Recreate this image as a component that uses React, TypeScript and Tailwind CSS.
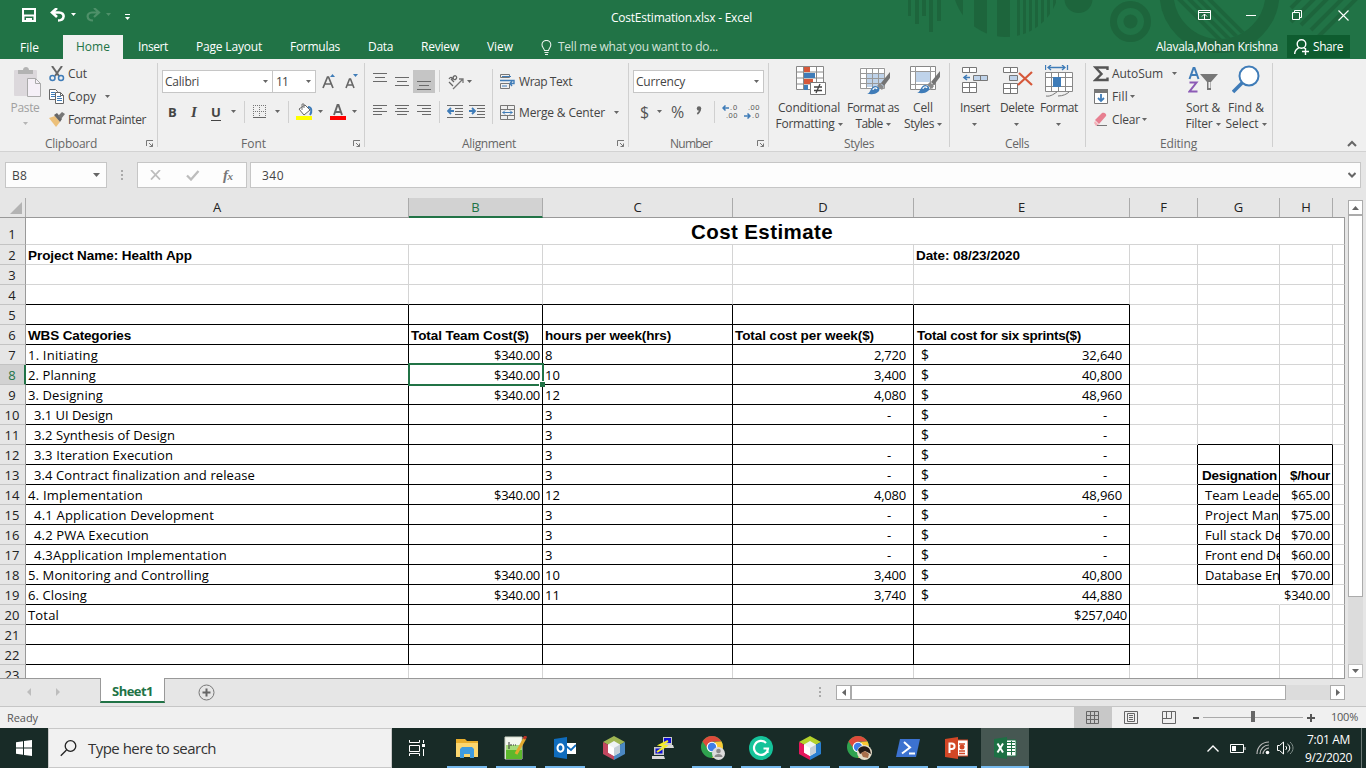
import { useLayoutEffect, useRef, type ReactNode } from "react";

/* Text run set to an exact advance width by adjusting its tracking. */
function Fit({ w, t, c = "" }: { w: number; t: string; c?: string }) {
  const ref = useRef<HTMLSpanElement>(null);
  useLayoutEffect(() => {
    const el = ref.current;
    if (!el) return;
    el.style.letterSpacing = "0px";
    const natural = el.getBoundingClientRect().width;
    el.style.letterSpacing = `${(w - natural) / t.length}px`;
  }, [w, t]);
  return (
    <span className={`inline-block shrink-0 whitespace-pre text-left ${c}`} style={{ width: w }}>
      <span ref={ref} className="inline-block">{t}</span>
    </span>
  );
}

function Svg({ w, h, c = "", children }: { w: number; h: number; c?: string; children: ReactNode }) {
  return (
    <svg width={w} height={h} viewBox={`0 0 ${w} ${h}`} fill="none" className={`block shrink-0 ${c}`}>
      {children}
    </svg>
  );
}

function Caret({ c = "", color = "#666" }: { c?: string; color?: string }) {
  return (
    <Svg w={5} h={3} c={c}>
      <path d="M0 0h5L2.5 3z" fill={color} />
    </Svg>
  );
}

function Launcher() {
  return (
    <Svg w={8} h={8} c="mr-[3px]">
      <path d="M.5 6V.5H7M3 3l3.500 3.500M6.500 3.500v3h-3" stroke="#777" />
    </Svg>
  );
}

function Divider({ c = "" }: { c?: string }) {
  return <div className={`w-px shrink-0 bg-[#d0d0d0] ${c}`} />;
}

function Group({ label, lw, lx, w, launcher, children }: { label: string; lw: number; lx: number; w: number; launcher?: boolean; children: ReactNode }) {
  return (
    <section className="flex h-[92px] shrink-0" style={{ width: w }}>
      <div className="flex min-w-0 flex-1 flex-col">
        <div className="flex h-[76px]">{children}</div>
        <div className="flex h-4 items-center justify-between pt-[2px] text-[#666]">
          <div className="flex" style={{ paddingLeft: lx }}>
            <Fit w={lw} t={label} />
          </div>
          {launcher && <Launcher />}
        </div>
      </div>
      <Divider c="mt-1 h-[84px]" />
    </section>
  );
}

function Big({ w, icon, a, aw, b, bw, c = "" }: { w: number; icon: ReactNode; a: string; aw: number; b?: string; bw?: number; c?: string }) {
  return (
    <div className={`flex shrink-0 flex-col items-center ${c}`} style={{ width: w }}>
      <div className="flex h-[41px] items-start justify-center pt-[6px]">{icon}</div>
      <div className="flex h-4 items-center"><Fit w={aw} t={a} /></div>
      <div className="flex h-4 items-center">
        {b && <Fit w={bw ?? 0} t={b} />}
        <Caret c={b ? "ml-[3px]" : "mr-px"} />
      </div>
    </div>
  );
}

const G = "#6a6a6a";
const BL = "#3f7cb8";

function Lines({ rows, c = "" }: { rows: [number, number][]; c?: string }) {
  return (
    <Svg w={14} h={14} c={c}>
      {rows.map(([x, l], i) => (
        <path key={i} d={`M${x} ${i * 3 + (rows.length === 3 ? i : 0) + 0.5}h${l}`} stroke={G} />
      ))}
    </Svg>
  );
}

function Indent({ inc }: { inc?: boolean }) {
  return (
    <Svg w={16} h={13}>
      <path d="M0 .5h16M8 3.500h8M8 6.500h8M8 9.500h8M0 12.500h16" stroke={G} />
      <path d={inc ? "M0 6h6M3 3l3 3-3 3" : "M7 6H1M4 3L1 6l3 3"} stroke={BL} strokeWidth="1.800" />
    </Svg>
  );
}

function Brush() {
  return (
    <g>
      <path d="M30 7l-9 11 3 3 6-8z" fill="#737373" />
      <path d="M20 18l4 4-2 3-5-4z" fill="#8a8a8a" />
      <path d="M7 29c4-1 3-7 8-8 4 0 6 4 3 6-3 3-7 2-11 2z" fill={BL} />
      <path d="M13 25c0-2 3-3 4-1" stroke="#fff" strokeWidth="1.300" />
    </g>
  );
}

function Ribbon() {
  return (
    <div className="flex h-[93px] border-b border-[#d2d2d2] bg-[#f0f0f0] text-[12px] leading-4 text-[#444]">
      <Group label="Clipboard" lx={45} lw={52} w={158} launcher>
        <div className="flex w-[49px] flex-col items-center pl-px pt-[8px] text-[#a0a0a0]">
          <Svg w={29} h={31} c="ml-[5px]">
            <rect x="1" y="3" width="23" height="26" rx="1" fill="#dcd8dc" />
            <path d="M5 3h5c0-4 6-4 6 0h4v4H5z" fill="#b3b3b3" />
            <path d="M14.500 11.500h8l5 5v13h-13z" fill="#f5f0f7" stroke="#aaa" />
            <path d="M22.500 11.500v5h5" stroke="#aaa" />
          </Svg>
          <Fit w={29} t="Paste" c="mt-[2px]" />
          <Caret c="mt-[6px]" color="#b5b5b5" />
        </div>
        <div className="flex flex-col pt-[3px]">
          <div className="flex h-[23px] items-center gap-[3px]">
            <Svg w={16} h={16}>
              <path d="M3 0l7 10M13 0L6 10" stroke="#666" strokeWidth="2" />
              <circle cx="3.500" cy="12" r="2.500" stroke={BL} strokeWidth="1.500" />
              <circle cx="12" cy="12" r="2.500" stroke={BL} strokeWidth="1.500" />
            </Svg>
            <Fit w={19} t="Cut" />
          </div>
          <div className="flex h-[23px] items-center gap-[3px]">
            <Svg w={16} h={15}>
              <path d="M.5.5h6l2 2v8h-8z" fill="#fff" stroke="#666" />
              <path d="M2 3.500h4M2 5.500h4M2 7.500h4" stroke={BL} />
              <path d="M6.500 3.500h5l3 3v8h-8z" fill="#fff" stroke="#666" />
              <path d="M11.500 3.500v3h3" stroke="#666" />
              <path d="M8 7.500h4M8 9.500h5M8 11.500h5" stroke={BL} />
            </Svg>
            <Fit w={28} t="Copy" />
            <Caret c="ml-[6px]" />
          </div>
          <div className="flex h-[23px] items-center gap-[3px]">
            <Svg w={16} h={15}>
              <path d="M0 6l6-2 5 6-4 5z" fill="#ecc07a" />
              <path d="M5 3l3-2 5 6-2 3z" fill="#666" />
              <path d="M9 4l4-4 3 2-4 5z" fill="#777" />
            </Svg>
            <Fit w={78} t="Format Painter" />
          </div>
        </div>
      </Group>

      <Group label="Font" lx={83} lw={25} w={207} launcher>
        <div className="flex flex-col pt-[11px]">
          <div className="flex h-[23px] items-center pl-[4px]">
            <div className="flex h-[23px] w-[111px] items-center justify-between border border-[#c6c6c6] bg-white pl-[2px] pr-[4px]">
              <Fit w={34} t="Calibri" />
              <Caret />
            </div>
            <div className="flex h-[23px] w-[43px] items-center justify-between border border-l-0 border-[#c6c6c6] bg-white pl-[3px] pr-[4px]">
              <Fit w={12} t="11" />
              <Caret />
            </div>
            <Svg w={14} h={16} c="ml-[6px]">
              <path d="M1 14L5.500 3h1L11 14M2.500 10h7" stroke="#666" strokeWidth="1.700" />
              <path d="M8 3h5l-2.500-3z" fill={BL} />
            </Svg>
            <Svg w={13} h={16} c="ml-[9px]">
              <path d="M1 14L4.500 5h1L9 14M2.500 11h5" stroke="#666" strokeWidth="1.600" />
              <path d="M8 0h5l-2.500 3z" fill={BL} />
            </Svg>
          </div>
          <div className="mt-[7px] flex h-[23px] items-center pl-[10px] text-[13px] leading-5 text-[#444]">
            <span className="w-[9px] font-bold">B</span>
            <span className="ml-[11px] w-[12px] text-center font-['Liberation_Serif'] text-[15px] font-bold italic">I</span>
            <span className="ml-[11px] h-[18px] w-[10px] border-b border-[#444] text-center font-bold leading-[19px]">U</span>
            <Caret c="ml-[10px]" />
            <Divider c="ml-[8px] h-[22px]" />
            <Svg w={14} h={14} c="ml-[8px]">
              <path d="M.5 0v12M6.500 0v12M12.500 0v12M0 .5h13M0 6.500h13" stroke="#777" strokeDasharray="1 1" />
              <path d="M0 12.500h13" stroke="#666" />
            </Svg>
            <Caret c="ml-[8px]" />
            <Divider c="ml-[8px] h-[22px]" />
            <Svg w={17} h={17} c="ml-[7px]">
              <path d="M3 6l6-4 5 5-6 5z" fill="#fff" stroke="#666" />
              <path d="M6 7V1h2v4" stroke="#777" />
              <path d="M12 4c4 0 4 5 2 8" stroke={BL} strokeWidth="2" />
              <path d="M0 13h16v4H0z" fill="#ff0" />
            </Svg>
            <Caret c="ml-[5px]" />
            <Svg w={16} h={17} c="ml-[7px]">
              <path d="M4 12L7.500 2h1L12 12M5 9h6" stroke="#666" strokeWidth="1.900" />
              <path d="M0 13h16v4H0z" fill="#f00" />
            </Svg>
            <Caret c="ml-[6px]" />
          </div>
        </div>
      </Group>

      <Group label="Alignment" lx={97} lw={54} w={264} launcher>
        <div className="flex w-[127px] flex-col pt-[11px]">
          <div className="flex h-[23px] items-start">
            <Lines c="ml-[8px] mt-[3px]" rows={[[0, 14], [2, 10], [0, 14]]} />
            <Lines c="ml-[8px] mt-[7px]" rows={[[0, 14], [2, 10], [0, 14]]} />
            <div className="ml-[4px] flex h-[23px] w-[22px] items-start justify-center bg-[#c5c5c5] pt-[11px]">
              <Lines rows={[[0, 14], [2, 10], [0, 14]]} />
            </div>
            <Divider c="ml-[4px] h-[22px]" />
            <Svg w={16} h={16} c="ml-[8px] mt-[4px]">
              <path d="M1 8l4 4M3 5l3 3M1 5c2-3 4-1 3 1M5 3c2-3 5 0 3 2s-4-1-2-3" stroke="#666" strokeWidth="1.300" />
              <path d="M5 15L15 5M11 5h4v4" stroke="#777" strokeWidth="1.300" />
            </Svg>
            <Caret c="ml-[3px] mt-[10px]" />
          </div>
          <div className="mt-[7px] flex h-[23px] items-center">
            <Lines c="ml-[8px]" rows={[[0, 14], [0, 9], [0, 14], [0, 9], [0, 0]]} />
            <Lines c="ml-[8px]" rows={[[0, 14], [2, 10], [0, 14], [2, 10], [0, 0]]} />
            <Lines c="ml-[8px]" rows={[[0, 14], [5, 9], [0, 14], [5, 9], [0, 0]]} />
            <Divider c="ml-[8px] h-[22px]" />
            <span className="ml-[7px]"><Indent /></span>
            <span className="ml-[6px]"><Indent inc /></span>
          </div>
        </div>
        <Divider c="mt-[10px] h-[55px]" />
        <div className="flex flex-col pl-[7px] pt-[11px]">
          <div className="flex h-[23px] items-center">
            <Svg w={16} h={15}>
              <path d="M.5.500h9v3h-9zM.5 9.500h9v5h-9z" stroke="#777" />
              <path d="M0 6.500h14v3h-4M12 7l-2 2.500 2 2.500" stroke={BL} strokeWidth="1.400" />
              <path d="M2 2.500h9M2 12h5" stroke={BL} />
            </Svg>
            <Fit w={53} t="Wrap Text" c="ml-[3px]" />
          </div>
          <div className="mt-[8px] flex h-[23px] items-center">
            <Svg w={15} h={15}>
              <path d="M.5.500h14v14H.5zM.5 4.500h14M.5 10.500h14M7.500 0v4M7.500 11v4" stroke="#777" />
              <path d="M2.500 7.500h10M5 5.500l-2 2 2 2M10 5.500l2 2-2 2" stroke={BL} />
            </Svg>
            <Fit w={86} t="Merge & Center" c="ml-[4px]" />
            <Caret c="ml-[9px]" />
          </div>
        </div>
      </Group>

      <Group label="Number" lx={41} lw={42} w={140} launcher>
        <div className="flex flex-col pt-[11px]">
          <div className="flex h-[23px] items-center pl-[4px]">
            <div className="flex h-[23px] w-[131px] items-center justify-between border border-[#c6c6c6] bg-white pl-[2px] pr-[4px]">
              <Fit w={49} t="Currency" />
              <Caret />
            </div>
          </div>
          <div className="mt-[7px] flex h-[23px] items-center pl-[11px] text-[16px] leading-5 text-[#555]">
            <Fit w={9} t="$" />
            <Caret c="ml-[8px]" />
            <Fit w={14} t="%" c="ml-[9px]" />
            <Svg w={6} h={9} c="ml-[11px] mb-[2px]">
              <circle cx="3" cy="2.500" r="2.200" fill="#666" />
              <path d="M4.300 2.500c0 3-1 4-3 5.500" stroke="#666" strokeWidth="1.600" />
            </Svg>
            <Divider c="ml-[12px] h-[22px]" />
            <div className="ml-[7px] flex h-[16px] w-[16px] flex-col font-['Liberation_Sans'] text-[7.500px] leading-[8px]">
              <div className="flex h-[8px] items-center justify-between">
                <Svg w={7} h={6}><path d="M1 3h6M3.500.5L1 3l2.500 2.500" stroke={BL} strokeWidth="1.500" /></Svg>
                <Fit w={8} t=".0" />
              </div>
              <div className="flex h-[8px] justify-end"><Fit w={12} t=".00" /></div>
            </div>
            <div className="ml-[6px] flex h-[16px] w-[16px] flex-col font-['Liberation_Sans'] text-[7.500px] leading-[8px]">
              <div className="flex h-[8px] justify-end"><Fit w={12} t=".00" /></div>
              <div className="flex h-[8px] items-center justify-between">
                <Svg w={7} h={6}><path d="M0 3h6M3.500.5L6 3 3.500 5.500" stroke={BL} strokeWidth="1.500" /></Svg>
                <Fit w={8} t=".0" />
              </div>
            </div>
          </div>
        </div>
      </Group>

      <Group label="Styles" lx={75} lw={30} w={181}>
        <Big c="ml-[6px]" w={68} a="Conditional" aw={62} b="Formatting" bw={59} icon={
          <Svg w={30} h={31} c="ml-[3px]">
            <path d="M.5 1.500h27v23H.5zM7.500 1v24M20.500 1v24M0 7h28M0 13h28M0 19h28" stroke="#888" fill="#fff" />
            <path d="M8 2h6v5H8zM8 14h9v5H8z" fill="#d6583a" />
            <path d="M8 8h11v5H8zM8 20h4v5H8z" fill={BL} />
            <path d="M14.500 17.500h15v12h-15z" fill="#fff" stroke="#777" />
            <path d="M18 22h8M18 25.500h8M24 19l-4 9" stroke="#444" strokeWidth="1.300" />
          </Svg>
        } />
        <Big c="ml-[2px]" w={56} a="Format as" aw={52} b="Table" bw={27} icon={
          <Svg w={30} h={31} c="ml-[3px]">
            <path d="M.5 2.500h24v21H.5z" fill="#fff" />
            <path d="M7 8h18v14H7z" fill="#bfd3ea" />
            <path d="M.5 3.500h24v20H.5zM6.500 3v21M12.500 3v21M18.500 3v21M0 8.500h25M0 13.500h25M0 18.500h25" stroke="#999" />
            <Brush />
          </Svg>
        } />
        <Big c="ml-[2px]" w={40} a="Cell" aw={20} b="Styles" bw={30} icon={
          <Svg w={30} h={31} c="ml-[3px]">
            <path d="M.5 1.500h25v23H.5z" fill="#fff" stroke="#888" />
            <path d="M.5 6.500h25M.5 19.500h25M5.500 1v24M20.500 1v24" stroke="#999" />
            <path d="M6 7h14v10H6z" fill="#bfd3ea" />
            <g transform="translate(0 -1)"><Brush /></g>
          </Svg>
        } />
      </Group>

      <Group label="Cells" lx={55} lw={24} w={136}>
        <Big c="ml-[5px]" w={40} a="Insert" aw={30} icon={
          <Svg w={27} h={31} c="ml-px">
            <path d="M.5 2.500h14v5H.5zM7.500 2v6M.5 17.500h14v10H.5zM7.500 17v11M0 22.500h15" stroke="#777" fill="#fff" />
            <path d="M11.500 10.500h14v5h-14z" fill="#bfd3ea" stroke="#777" />
            <path d="M18.500 10v6" stroke="#777" />
            <path d="M8 12.500H2M5 10l-3 2.500L5 15" stroke={BL} strokeWidth="1.600" />
          </Svg>
        } />
        <Big c="ml-[2px]" w={40} a="Delete" aw={34} icon={
          <Svg w={30} h={31} c="ml-[2px]">
            <path d="M.5 2.500h14v5H.5zM7.500 2v6M.5 18.500h14v10H.5zM7.500 18v11M0 23.500h15" stroke="#777" fill="#fff" />
            <path d="M6.500 10.500h8v5h-8z" fill="#bfd3ea" stroke="#777" />
            <path d="M16 8l13 12M29 7L15 20" stroke="#d6583a" strokeWidth="2.200" />
          </Svg>
        } />
        <Big w={44} a="Format" aw={38} icon={
          <Svg w={29} h={32} c="ml-px">
            <path d="M.5 0v5M22.500 0v5M3 2.500h17M6 0L3 2.500 6 5M17 0l3 2.500L17 5" stroke={BL} strokeWidth="1.300" />
            <path d="M.5 7.500h27v19H.5zM6.500 7v20M13.500 7v20M20.500 7v20M0 12.500h28M0 21.500h28" stroke="#888" fill="#fff" />
            <path d="M8 12h8v10H8z" fill={BL} />
            <path d="M1 31c5 1 9-3 11-4M13 31c5 0 9-2 11-4" stroke="#777" />
          </Svg>
        } />
      </Group>

      <Group label="Editing" lx={74} lw={37} w={187}>
        <div className="flex w-[96px] flex-col pl-[7px] pt-[3px]">
          <div className="flex h-[23px] items-center">
            <Svg w={16} h={16}><path d="M14.500 4V1.500H2.500L8.500 8l-6 6h12V11.500" stroke="#555" strokeWidth="2.400" /></Svg>
            <Fit w={51} t="AutoSum" c="ml-[3px]" />
            <Caret c="ml-[9px]" />
          </div>
          <div className="flex h-[23px] items-center">
            <Svg w={16} h={15}>
              <path d="M1.500.5h13v14h-13z" fill="#fff" stroke="#777" />
              <path d="M1 0h14v4H1z" fill="#777" />
              <path d="M8 5v7M5 9l3 3 3-3" stroke={BL} strokeWidth="1.800" />
            </Svg>
            <Fit w={16} t="Fill" c="ml-[3px]" />
            <Caret c="ml-[2px]" />
          </div>
          <div className="flex h-[23px] items-center">
            <Svg w={16} h={15}>
              <path d="M2 8l7-7c2-1 5 1 4 3l-7 8z" fill="#e77f90" />
              <path d="M2 9l4 4-2 1H3L1 11z" fill="#f4b0b8" />
              <path d="M4 13.500h10" stroke="#777" />
            </Svg>
            <Fit w={28} t="Clear" c="ml-[3px]" />
            <Caret c="ml-[2px]" />
          </div>
        </div>
        <Big w={42} a="Sort &" aw={34} b="Filter" bw={27} icon={
          <Svg w={30} h={31}>
            <path d="M1.500 14L5.500 3h1l4 11M3 10h6" stroke={BL} strokeWidth="2" />
            <path d="M1.500 17.500h7l-7 9h8" stroke="#8c5bb5" strokeWidth="2" />
            <path d="M12 9h18l-7 8v8h-4v-8z" fill="#777" />
            <path d="M20.500 17h2v6h-2z" fill="#eee" />
          </Svg>
        } />
        <Big c="ml-[1px]" w={42} a="Find &" aw={36} b="Select" bw={33} icon={
          <Svg w={28} h={30}>
            <circle cx="17" cy="11" r="9.500" stroke={BL} strokeWidth="2" fill="#fff" />
            <path d="M10 18l-9 9" stroke={BL} strokeWidth="3.500" />
          </Svg>
        } />
      </Group>
      <Svg w={10} h={7} c="ml-[74px] mt-[81px]"><path d="M1 6l4-4 4 4" stroke="#666" strokeWidth="2" /></Svg>
    </div>
  );
}

function TitlePattern() {
  return (
    <svg width="466" height="59" viewBox="900 0 466 59" className="absolute right-0 top-0" fill="#1d653c">
      <defs>
        <clipPath id="disc"><circle cx="1006" cy="-16.500" r="53.500" /></clipPath>
        <clipPath id="hole"><circle cx="1219.500" cy="-7" r="46" /></clipPath>
      </defs>
      <path d="M908 0h3v16h-3zM915 0h4v24h-4zM922 0h4v16h-4zM929 0h4v32h-4zM937 0h4v21h-4z" />
      <path clipPath="url(#disc)" d="M950 0h13v40h-13zM974 0h13v40h-13zM997 0h13v40h-13zM1017 0h3v40h-3zM1023 0h3v40h-3zM1029 0h3v40h-3zM1035 0h3v40h-3zM1041 0h3v40h-3zM1047 0h3v40h-3zM1053 0h3v40h-3z" />
      <circle cx="1078.500" cy="-1" r="14" />
      <circle cx="1130.500" cy="21.500" r="17" fill="none" stroke="#1d653c" strokeWidth="7" />
      <circle cx="1130.500" cy="21.500" r="7" />
      <circle cx="1219.500" cy="-7" r="53" fill="none" stroke="#1d653c" strokeWidth="14" />
      <path clipPath="url(#hole)" d="M1172-8l60 60M1182-8l60 60M1192-8l60 60M1202-8l60 60" stroke="#1d653c" strokeWidth="4" />
      <path d="M1291 8L1301-2M1291 22L1315-2M1301 25L1328-2M1311 30L1343-2M1318 37L1357-2" stroke="#1d653c" strokeWidth="4" />
    </svg>
  );
}

const tabs: [string, number, number][] = [
  ["Insert", 15, 30], ["Page Layout", 28, 66], ["Formulas", 28, 50], ["Data", 28, 25], ["Review", 28, 38], ["View", 28, 26],
];

function TitleBar() {
  return (
    <header className="relative h-[59px] bg-[#217346] text-[12px] text-white">
      <TitlePattern />
      <div className="relative flex h-[35px] items-start">
        <Svg w={15} h={14} c="ml-[22px] mt-[8px]">
          <path d="M0 0h14v14H0zM2 2v4.500h10V2zM2.500 8.500V12H4v-2h6v2h1.500V8.500z" fill="#fff" fillRule="evenodd" />
        </Svg>
        <Svg w={16} h={14} c="ml-[13px] mt-[8px]">
          <path d="M7 0L2 4.500 7 9M2 4.500h7c6.500 0 6 8-1 8" stroke="#fff" strokeWidth="2.600" />
        </Svg>
        <Caret c="ml-[5px] mt-[13px]" color="#fff" />
        <Svg w={16} h={14} c="ml-[10px] mt-[8px]">
          <path d="M8 0l5 4.500L8 9M13 4.500H6c-6 0-6 8 1 8" stroke="#4e9069" strokeWidth="2.200" />
        </Svg>
        <Caret c="ml-[4px] mt-[13px]" color="#4e9069" />
        <Svg w={6} h={6} c="ml-[14px] mt-[14px]"><path d="M0 .5h5" stroke="#fff" /><path d="M0 3h5L2.500 6z" fill="#fff" /></Svg>
        <Fit w={141} t="CostEstimation.xlsx - Excel" c="ml-[480px] mt-[9px] leading-[18px]" />
        <Svg w={14} h={12} c="ml-[446px] mt-[9px]">
          <path d="M.5 1.500h12v9H.5zM.5 3.500h12M6.500 10V5M4 7.500L6.500 5 9 7.500" stroke="#fff" />
        </Svg>
        <Svg w={11} h={2} c="ml-[34px] mt-[15px]"><path d="M0 .5h10" stroke="#fff" /></Svg>
        <Svg w={12} h={12} c="ml-[35px] mt-[10px]"><path d="M.5 2.500h7v7h-7zM2.500 2V.5h7v7H8" stroke="#fff" /></Svg>
        <Svg w={11} h={11} c="ml-[34px] mt-[10px]"><path d="M.5.5l10 10M10.500.5l-10 10" stroke="#fff" strokeWidth="1.100" /></Svg>
      </div>
      <div className="relative flex h-[24px] items-center leading-6">
        <Fit w={19} t="File" c="ml-[20px] mt-[1px]" />
        <div className="ml-[24px] flex h-[24px] w-[60px] items-center justify-center bg-[#f0f0f0] text-[#217346]"><Fit w={34} t="Home" /></div>
        {tabs.map(([t, m, w]) => (
          <span key={t} className="flex" style={{ paddingLeft: m }}><Fit w={w} t={t} /></span>
        ))}
        <Svg w={11} h={15} c="ml-[28px]">
          <path d="M3.500 10.500C3 8 1 7.500 1 4.800a4.400 4.400 0 0 1 8.800 0C9.800 7.500 8 8 7.500 10.500zM3.500 12.500h4M4 14.500h3" stroke="#e8f1eb" strokeWidth="1.100" />
        </Svg>
        <Fit w={160} t="Tell me what you want to do..." c="ml-[6px] text-[#d3e3da]" />
        <Fit w={122} t="Alavala,Mohan Krishna" c="ml-[438px]" />
        <div className="mb-px ml-[9px] flex h-[23px] w-[63px] items-center bg-[#0e5c2f] pl-[7px]">
          <Svg w={16} h={16}>
            <circle cx="7.500" cy="5" r="4.300" stroke="#fff" strokeWidth="1.400" />
            <path d="M.7 15c0-4 2-5 4.500-6.500M9.500 8.500l1.500 1M11.500 9v7M8 12.500h7" stroke="#fff" strokeWidth="1.400" />
          </Svg>
          <Fit w={30} t="Share" c="ml-[3px]" />
        </div>
      </div>
    </header>
  );
}

function FormulaBar() {
  return (
    <div className="flex h-[46px] items-start bg-[#e6e6e6] pt-[10px] text-[12px] leading-6 text-[#444]">
      <div className="ml-[5px] flex h-[26px] w-[102px] items-center justify-between border border-[#c6c6c6] bg-[#fdfdfd] pl-[6px] pr-[6px]">
        <Fit w={15} t="B8" c="pt-px" />
        <Svg w={7} h={4}><path d="M0 0h7L3.500 4z" fill="#666" /></Svg>
      </div>
      <Svg w={2} h={11} c="ml-[14px] mt-[8px]"><path d="M0 0h2v2H0zM0 4h2v2H0zM0 8h2v2H0z" fill="#aaa" /></Svg>
      <div className="ml-[14px] flex h-[26px] w-[110px] items-center border border-[#c6c6c6] bg-[#fdfdfd]">
        <Svg w={11} h={10} c="ml-[12px]"><path d="M1 0l9 9.500M10 0L1 9.500" stroke="#bdbdbd" strokeWidth="1.800" /></Svg>
        <Svg w={14} h={11} c="ml-[25px]"><path d="M1 5.500l4 4L12.500 1" stroke="#bdbdbd" strokeWidth="2.300" /></Svg>
        <span className="ml-[23px] font-['Liberation_Serif'] text-[15px] font-bold italic leading-5 tracking-[-0.500px] text-[#777]">f<span className="text-[11px]">x</span></span>
      </div>
      <div className="ml-[3px] flex h-[26px] w-[1111px] items-center justify-between border border-[#c6c6c6] bg-[#fdfdfd] pl-[11px] pr-[4px]">
        <Fit w={22} t="340" c="pt-px" />
        <Svg w={8} h={6}><path d="M.5 1L4 4.500 7.500 1" stroke="#666" strokeWidth="2" /></Svg>
      </div>
    </div>
  );
}

const colW = [383, 134, 190, 181, 216, 68, 82, 53, 12];
const colN = ["A", "B", "C", "D", "E", "F", "G", "H", ""];

type Item = { t: string; w: number; b?: boolean; right?: number; pad?: number };
const m = (t: string, w: number): Item => ({ t, w, right: 2 });
const n = (t: string, w: number): Item => ({ t, w, right: 7 });
const s = (t: string, w: number, pad = 2): Item => ({ t, w, pad });
const h = (t: string, w: number, pad = 2): Item => ({ t, w, b: true, pad });
const dash: Item = { t: "-", w: 5, right: 21 };
const usd = m("$340.00", 46);

const cells: Record<string, Item> = {
  A2: h("Project Name: Health App", 164), E2: h("Date: 08/23/2020", 104),
  A6: h("WBS Categories", 103), B6: h("Total Team Cost($)", 118), C6: h("hours per week(hrs)", 126), D6: h("Total cost per week($)", 139), E6: h("Total cost for six sprints($)", 164, 3),
  A7: s("1. Initiating", 70), A8: s("2. Planning", 68), A9: s("3. Designing", 75),
  A10: s("3.1 UI Design", 79, 8), A11: s("3.2 Synthesis of Design", 141, 8), A12: s("3.3 Iteration Execution", 139, 8),
  A13: s("3.4 Contract finalization and release", 221, 8), A14: s("4. Implementation", 115),
  A15: s("4.1 Application Development", 180, 8), A16: s("4.2 PWA Execution", 115, 8), A17: s("4.3Application Implementation", 193, 8),
  A18: s("5. Monitoring and Controlling", 181), A19: s("6. Closing", 59), A20: s("Total", 31),
  B7: usd, B8: usd, B9: usd, B14: usd, B18: usd, B19: usd, H19: usd,
  C7: s("8", 8), C8: s("10", 15), C9: s("12", 15), C10: s("3", 8), C11: s("3", 8), C12: s("3", 8), C13: s("3", 8), C14: s("12", 15),
  C15: s("3", 8), C16: s("3", 8), C17: s("3", 8), C18: s("10", 15), C19: s("11", 15),
  D7: n("2,720", 32), D8: n("3,400", 32), D9: n("4,080", 32), D10: dash, D12: dash, D13: dash, D14: n("4,080", 32), D15: dash, D16: dash, D17: dash, D18: n("3,400", 32), D19: n("3,740", 32),
  E7: n("32,640", 40), E8: n("40,800", 40), E9: n("48,960", 40), E14: n("48,960", 40), E18: n("40,800", 40), E19: n("44,880", 40),
  E10: dash, E11: dash, E12: dash, E13: dash, E15: dash, E16: dash, E17: dash, E20: m("$257,040", 53),
  G13: h("Designation", 75, 4), H13: { t: "$/hour", w: 40, b: true, right: 2 },
  G14: s("Team Leade", 74, 7), G15: s("Project Man", 74, 7), G16: s("Full stack De", 77, 7), G17: s("Front end De", 78, 7), G18: s("Database En", 75, 7),
  H14: m("$65.00", 39), H15: m("$75.00", 39), H16: m("$70.00", 39), H17: m("$60.00", 39), H18: m("$70.00", 39),
};

function borders(r: number, c: number) {
  const main = c <= 4;
  const bottom = (main && r >= 4 && r <= 22) || ((c === 6 || c === 7) && r >= 11 && r <= 18);
  const right = (main && r >= 5 && r <= 22) || (c >= 5 && c <= 7 && r >= 12 && r <= 18);
  const noRight = c === 6 && r === 19;
  return `${bottom ? "border-b-black" : "border-b-[#d4d4d4]"} ${c === 8 ? "border-r-[#999]" : noRight ? "border-r-white" : right ? "border-r-black" : "border-r-[#d4d4d4]"}`;
}

function Sheet() {
  return (
    <div className="flex h-[480px] bg-[#e6e6e6]">
      <div className="relative w-[1345px] overflow-hidden">
        <div className="flex h-[20px] border-b border-[#999] text-[13px] leading-[19px] text-[#222]">
          <div className="flex h-[19px] w-[26px] items-end justify-end border-r border-[#ababab] pb-[3px] pr-[3px]">
            <Svg w={12} h={12}><path d="M12 0v12H0z" fill="#b3b3b3" /></Svg>
          </div>
          {colW.map((w, i) => (
            <div key={i} style={{ width: w }} className={`shrink-0 text-center ${i === 1 ? "h-[20px] border-b-2 border-r border-b-[#217346] border-r-[#ababab] bg-[#d2d2d2] text-[#217346]" : i === 8 ? "h-[19px]" : "h-[19px] border-r border-[#ababab]"}`}>
              {colN[i]}
            </div>
          ))}
        </div>
        {Array.from({ length: 23 }, (_, i) => i + 1).map((r) => (
          <div key={r} className={`flex shrink-0 text-[13px] text-black ${r === 1 ? "h-[27px] leading-[32px]" : "h-[20px] leading-[21px]"}`}>
            <div className={`w-[26px] shrink-0 border-b border-b-[#c3c3c3] text-center ${r === 8 ? "border-r-2 border-r-[#217346] bg-[#d2d2d2] text-[#217346]" : "border-r border-r-[#999] pr-px text-[#222]"}`}>
              {r}
            </div>
            {r === 1 ? (
              <div className="flex w-[1319px] border-b border-r border-b-[#d4d4d4] border-r-[#999] bg-white pl-[665px] font-['Liberation_Sans'] text-[20.500px] font-bold leading-[28px]">
                <Fit w={142} t="Cost Estimate" />
              </div>
            ) : (
              colW.map((w, c) => {
                const it = cells[colN[c] + r];
                return (
                  <div key={c} style={{ width: w, paddingRight: it?.right, paddingLeft: it?.pad }} className={`flex shrink-0 overflow-hidden border-b border-r bg-white ${it?.right ? "justify-end" : ""} ${borders(r, c)}`}>
                    {c === 4 && r >= 7 && r <= 19 && <span className="flex-1 pl-[7px] text-[14px] leading-[20px]">$</span>}
                    {it && <Fit w={it.w} t={it.t} c={it.b ? "font-['Liberation_Sans'] text-[13.500px] font-bold" : ""} />}
                  </div>
                );
              })
            )}
          </div>
        ))}
        <div className="absolute left-[408px] top-[165px] h-[23px] w-[136px] border-2 border-[#217346]" />
        <div className="absolute left-[539px] top-[183px] h-[6px] w-[6px] border-l border-t border-white bg-[#217346]" />
      </div>
      <div className="ml-[3px] mt-[2px] flex h-[478px] w-[15px] flex-col bg-[#dcdcdc]">
        <div className="flex h-[15px] items-center justify-center border border-[#ababab] bg-white"><Svg w={7} h={4}><path d="M0 4h7L3.500 0z" fill="#666" /></Svg></div>
        <div className="h-[382px] border border-[#ababab] bg-white" />
        <div className="mt-auto flex h-[14px] items-center justify-center border border-[#c0c0c0] bg-white"><Svg w={7} h={4}><path d="M0 0h7L3.500 4z" fill="#666" /></Svg></div>
      </div>
    </div>
  );
}

function SheetTabs() {
  return (
    <div className="flex h-[29px] items-start border-b border-b-[#c6c6c6] bg-[#e6e6e6]">
      <div className="flex h-[27px] w-[100px] items-center border-t border-[#999]">
        <Svg w={5} h={8} c="ml-[26px]"><path d="M5 0v8L1 4z" fill="#bdbdbd" /></Svg>
        <Svg w={5} h={8} c="ml-[25px]"><path d="M0 0v8l4-4z" fill="#bdbdbd" /></Svg>
      </div>
      <div className="flex h-[25px] w-[65px] items-center justify-center border-x border-b-2 border-x-[#999] border-b-[#217346] bg-white pt-[3px] text-[13px] font-bold leading-6 text-[#217346]"><Fit w={41} t="Sheet1" /></div>
      <div className="flex h-[28px] w-[1180px] items-center border-t border-[#999]">
        <Svg w={17} h={17} c="ml-[33px]">
          <circle cx="8.500" cy="8.500" r="7.500" stroke="#777" />
          <path d="M8.500 4.500v8M4.500 8.500h8" stroke="#666" strokeWidth="2" />
        </Svg>
        <Svg w={2} h={11} c="ml-[604px]"><path d="M0 0h2v2H0zM0 4h2v2H0zM0 8h2v2H0z" fill="#aaa" /></Svg>
        <div className="ml-[15px] flex h-[15px] w-[509px] bg-[#dcdcdc]">
          <div className="flex w-[15px] items-center justify-center border border-[#ababab] bg-white"><Svg w={4} h={7}><path d="M4 0v7L0 3.500z" fill="#666" /></Svg></div>
          <div className="w-[435px] border border-[#ababab] bg-white" />
          <div className="ml-auto flex w-[15px] items-center justify-center border border-[#ababab] bg-white"><Svg w={4} h={7}><path d="M0 0v7l4-3.500z" fill="#666" /></Svg></div>
        </div>
      </div>
    </div>
  );
}

function StatusBar() {
  return (
    <div className="flex h-[21px] items-center bg-[#f0f0f0] text-[11px] leading-5 text-[#555]">
      <Fit w={31} t="Ready" c="ml-[7px]" />
      <div className="ml-[1036px] flex h-[21px] w-[38px] items-center justify-center bg-[#c8c8c8]">
        <Svg w={13} h={13} c="mr-px mb-px"><path d="M.5.500h12v12H.5zM4.500 0v13M8.500 0v13M0 4.500h13M0 8.500h13" stroke="#666" /></Svg>
      </div>
      <Svg w={14} h={13} c="ml-[12px] mb-px"><path d="M.5.500h13v12H.5zM3.500 2.500h7v8h-7zM5 4.500h4M5 6.500h4M5 8.500h4" stroke="#666" /></Svg>
      <Svg w={14} h={13} c="ml-[24px] mb-px"><path d="M.5.500h13v12H.5zM4.500 0v7.500h5V0M0 7.500h5" stroke="#666" /></Svg>
      <Svg w={7} h={2} c="ml-[17px]"><path d="M0 1h6" stroke="#555" strokeWidth="2" /></Svg>
      <Svg w={100} h={12} c="ml-[3px] mb-px"><path d="M0 6.500h100" stroke="#aaa" /><path d="M48 0h4v11h-4z" fill="#666" /></Svg>
      <Svg w={8} h={8} c="ml-[4px]"><path d="M0 4h8M4 0v8" stroke="#555" strokeWidth="2" /></Svg>
      <Fit w={27} t="100%" c="ml-[16px] mb-[2px]" />
    </div>
  );
}

function Chrome() {
  return (
    <g>
      <circle cx="11" cy="11" r="11" fill="#2fa24f" />
      <path d="M1.500 5.500A11 11 0 0 1 20.500 5.500L11 5.800 7 13z" fill="#de4b3b" />
      <path d="M20.500 5.500A11 11 0 0 1 11 22l5-8.500L14 6z" fill="#fcc934" />
      <circle cx="11" cy="11" r="5.300" fill="#fff" />
      <circle cx="11" cy="11" r="4.200" fill="#3f7ee8" />
    </g>
  );
}

function NetBeans({ bright }: { bright?: boolean }) {
  return (
    <Svg w={24} h={24}>
      <path d="M12 0l11 6-11 6L1 6z" fill={bright ? "#b4d22b" : "#9fb653"} />
      <path d="M1 6l11 6v12L1 18z" fill={bright ? "#e5175c" : "#c2475f"} />
      <path d="M23 6l-11 6v12l11-6z" fill={bright ? "#2a7fd0" : "#4b88c2"} />
      <path d="M12 5l6 3.500v8L12 20l-6-3.500v-8z" fill="#eef3f6" />
      <path d="M12 12v8l6-3.500v-8z" fill="#c5d0d8" />
      <path d="M6 8.500l6 3.500v8l-6-3.500z" fill="#fff" />
    </Svg>
  );
}

function Task({ children, line }: { children?: ReactNode; line?: boolean }) {
  return (
    <div className="flex h-[40px] w-[49px] flex-col items-center">
      <div className="flex h-[38px] items-center justify-center pt-[2px]">{children}</div>
      {line && <div className="h-[2px] w-[40px] bg-[#76b9ed]" />}
    </div>
  );
}

function Taskbar() {
  return (
    <div className="flex h-[40px] bg-[#182b27] text-[12px] text-white">
      <div className="flex w-[48px] items-center justify-center">
        <Svg w={16} h={16}><path d="M0 2.200l7-1v6.300H0zM8 1l8-1v7.500H8zM0 8.500h7v6.300l-7-1zM8 8.500h8V16l-8-1z" fill="#fff" /></Svg>
      </div>
      <div className="mr-px flex w-[344px] items-center border border-[#c8c8c8] bg-[#f1f1f1] text-[15px] leading-6 text-[#333]">
        <Svg w={17} h={17} c="ml-[11px]"><circle cx="10.500" cy="6" r="5.300" stroke="#222" strokeWidth="1.300" /><path d="M6.500 10L.8 15.700" stroke="#222" strokeWidth="1.300" /></Svg>
        <Fit w={128} t="Type here to search" c="ml-[11px]" />
      </div>
      <Task><Svg w={17} h={16} c="mr-px"><path d="M.5 0v2.500h10V0M.5 5.500h10v6H.5zM.5 16v-2.500h10V16M14.500 0v3M14.500 9v7" stroke="#fff" /><path d="M13 4h3v3h-3z" fill="#fff" /></Svg></Task>
      <Task line>
        <Svg w={22} h={19}>
          <path d="M0 0h9l2 2h11v16H0z" fill="#e8ae2c" /><path d="M0 4h22v14H0z" fill="#fbd66f" />
          <path d="M4 19v-9l2-2h10l2 2v9h-4v-4H8v4z" fill="#3e9be0" />
        </Svg>
      </Task>
      <Task line>
        <Svg w={23} h={24}>
          <path d="M1 1h17v22H1z" fill="#f3f7ee" stroke="#cfd6c8" /><path d="M2 9h16v14H2z" fill="#5cb82c" /><path d="M2 9h16v5H2z" fill="#a5dc79" />
          <path d="M5 6v7M6 9h2M9 9h1M11 9h1" stroke="#333" /><path d="M21 2l-9 16" stroke="#e2a92e" strokeWidth="3" /><path d="M22 0l-2 3" stroke="#b83227" strokeWidth="3" />
        </Svg>
      </Task>
      <Task line>
        <Svg w={22} h={22}>
          <path d="M10 6h12v11H10z" fill="#fff" /><path d="M11 8l6 5 5-5" stroke="#0f6cbd" strokeWidth="1.800" />
          <path d="M0 2l13-2v22L0 20z" fill="#0f6cbd" /><ellipse cx="6.500" cy="11" rx="3" ry="3.700" stroke="#fff" strokeWidth="2" />
        </Svg>
      </Task>
      <Task><NetBeans /></Task>
      <Task>
        <Svg w={22} h={24}>
          <path d="M11 1h9v8h-9zM2 11h10v8H2z" fill="#c9c9c9" /><path d="M12 2h7v5h-7zM3.500 12.500h7v5h-7z" fill="#1010d8" />
          <path d="M9 9h12l1 3H10zM0 20h12l1 3H0z" fill="#d9d9d9" /><path d="M16 5L8 9l6 1-9 6" stroke="#f4ee26" strokeWidth="2" />
        </Svg>
      </Task>
      <Task line>
        <Svg w={24} h={24} c="ml-[2px]"><Chrome /><circle cx="17.500" cy="17.500" r="6.500" fill="#dcdcdc" /><circle cx="17.500" cy="15" r="2.300" fill="#8a8a8a" /><path d="M13.500 21c0-4 8-4 8 0z" fill="#8a8a8a" /></Svg>
      </Task>
      <Task line>
        <Svg w={24} h={24}><circle cx="12" cy="12" r="12" fill="#15c39a" /><path d="M17 7a7 7 0 1 0 2 5.500h-4.500M18.500 12.500V17" stroke="#fff" strokeWidth="2.200" /></Svg>
      </Task>
      <Task line><NetBeans bright /></Task>
      <Task line>
        <Svg w={25} h={24} c="ml-px"><Chrome /><circle cx="17.500" cy="16.500" r="7.500" fill="#e5dcc9" /><path d="M11 14c2-5 10-5 12 0l1 4-6-3-5 3z" fill="#241a16" /><path d="M14 17l4-2 4 3-1 4-5-1z" fill="#a86f4c" /></Svg>
      </Task>
      <Task line>
        <Svg w={24} h={18}><path d="M4 0h20l-4 18H0z" fill="#3c72d0" /><path d="M8 3l6 5.500-8 6M13 14.500h6" stroke="#fff" strokeWidth="2" /></Svg>
      </Task>
      <Task line>
        <Svg w={23} h={22}>
          <path d="M12 3h11v16H12z" fill="#fff" stroke="#d24726" /><path d="M14 7h6M14 14h6M14 16.500h6" stroke="#d24726" strokeWidth="1.300" /><circle cx="17" cy="10" r="2.500" fill="#d24726" />
          <path d="M0 2l13-2v22L0 20z" fill="#d24726" /><path d="M4.500 16V6.500h2.300a2.500 2.500 0 0 1 0 5.500H5" stroke="#fff" strokeWidth="2" />
        </Svg>
      </Task>
      <div className="flex w-[49px] flex-col">
        <div className="flex h-[38px] w-[48px] items-center justify-center bg-[#465752] pt-[2px]">
          <Svg w={23} h={22}>
            <path d="M11 3h11v16H11z" fill="#fff" stroke="#217346" /><path d="M13 5.500h8M13 8.500h8M13 11.500h8M13 14.500h8M17.500 4v14" stroke="#217346" />
            <path d="M0 2l13-2v22L0 20z" fill="#1d7044" /><path d="M3.500 6.500l5.500 9M9 6.500l-5.500 9" stroke="#fff" strokeWidth="2" />
          </Svg>
        </div>
        <div className="h-[2px] w-[48px] bg-[#76b9ed]" />
      </div>
      <div className="ml-auto flex items-center">
        <Svg w={12} h={7}><path d="M.5 6.500L6 1l5.500 5.500" stroke="#fff" strokeWidth="1.400" /></Svg>
        <Svg w={16} h={11} c="ml-[11px]"><path d="M.5 1.500h13v8H.5zM15 4v3" stroke="#fff" /><path d="M2 3h4v5H2z" fill="#fff" /></Svg>
        <Svg w={14} h={14} c="ml-[10px]"><path d="M1 13C1 6 6 1 13 1M4 13c0-5 4-9 9-9M7 13c0-3 3-6 6-6" stroke="#bbb" strokeWidth="1.200" /><circle cx="11.500" cy="11.500" r="1.800" fill="#fff" /></Svg>
        <Svg w={17} h={14} c="ml-[7px]"><path d="M.5 4.500h2l4-3.500v12l-4-3.500h-2z" stroke="#fff" /><path d="M8.500 5c1.500 1 1.500 3 0 4M10.500 3c3 2 3 6 0 8" stroke="#fff" /><path d="M13 1c4 3.500 4 8.500 0 12" stroke="#82908c" /></Svg>
        <div className="ml-[11px] flex w-[47px] flex-col items-center pt-[1px] leading-[18px]">
          <Fit w={43} t="7:01 AM" />
          <Fit w={47} t="9/2/2020" />
        </div>
        <div className="ml-[9px] mr-[4px] h-[40px] w-px bg-[#6b7875]" />
      </div>
    </div>
  );
}

export default function App() {
  return (
    <div className="flex h-[768px] w-[1366px] flex-col overflow-hidden font-['Open_Sans','Noto_Sans',sans-serif]">
      <TitleBar />
      <Ribbon />
      <FormulaBar />
      <Sheet />
      <SheetTabs />
      <StatusBar />
      <Taskbar />
    </div>
  );
}
